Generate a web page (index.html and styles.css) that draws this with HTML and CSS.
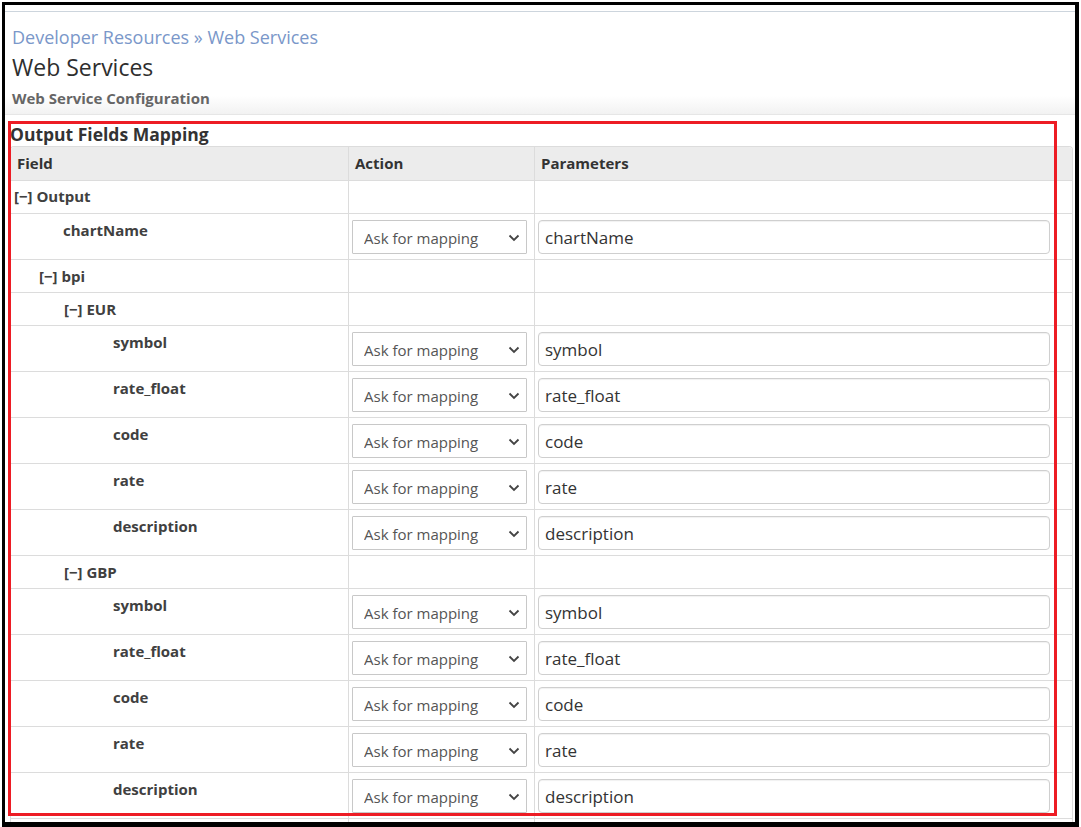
FILE: index.html
```html
<!DOCTYPE html>
<html>
<head>
<meta charset="utf-8">
<title>Web Services</title>
<link rel="stylesheet" href="styles.css">
</head>
<body>
<div class="frame">
  <div class="page">
    <div class="header">
      <div class="crumbs"><a href="#">Developer Resources</a> » <a href="#">Web Services</a></div>
      <h1 class="title">Web Services</h1>
      <div class="subtitle">Web Service Configuration</div>
    </div>
    <div class="content">
      <h2 class="section-title">Output Fields Mapping</h2>
      <table class="map">
        <colgroup><col class="c1"><col class="c2"><col class="c3"></colgroup>
        <thead>
          <tr><th>Field</th><th>Action</th><th>Parameters</th></tr>
        </thead>
        <tbody>
          <tr><td class="f l0">[&minus;] Output</td><td></td><td></td></tr>
          <tr><td class="f l2">chartName</td><td class="ctl"><div class="sel"><select><option>Ask for mapping</option></select><svg class="chev" width="12" height="8" viewBox="0 0 12 8"><path d="M1.5 1.5 L6 6 L10.5 1.5" fill="none" stroke="#444" stroke-width="1.8"/></svg></div></td><td class="ctl"><input class="param" value="chartName"></td></tr>
          <tr><td class="f l1">[&minus;] bpi</td><td></td><td></td></tr>
          <tr><td class="f l2g">[&minus;] EUR</td><td></td><td></td></tr>
          <tr><td class="f l4">symbol</td><td class="ctl"><div class="sel"><select><option>Ask for mapping</option></select><svg class="chev" width="12" height="8" viewBox="0 0 12 8"><path d="M1.5 1.5 L6 6 L10.5 1.5" fill="none" stroke="#444" stroke-width="1.8"/></svg></div></td><td class="ctl"><input class="param" value="symbol"></td></tr>
          <tr><td class="f l4">rate_float</td><td class="ctl"><div class="sel"><select><option>Ask for mapping</option></select><svg class="chev" width="12" height="8" viewBox="0 0 12 8"><path d="M1.5 1.5 L6 6 L10.5 1.5" fill="none" stroke="#444" stroke-width="1.8"/></svg></div></td><td class="ctl"><input class="param" value="rate_float"></td></tr>
          <tr><td class="f l4">code</td><td class="ctl"><div class="sel"><select><option>Ask for mapping</option></select><svg class="chev" width="12" height="8" viewBox="0 0 12 8"><path d="M1.5 1.5 L6 6 L10.5 1.5" fill="none" stroke="#444" stroke-width="1.8"/></svg></div></td><td class="ctl"><input class="param" value="code"></td></tr>
          <tr><td class="f l4">rate</td><td class="ctl"><div class="sel"><select><option>Ask for mapping</option></select><svg class="chev" width="12" height="8" viewBox="0 0 12 8"><path d="M1.5 1.5 L6 6 L10.5 1.5" fill="none" stroke="#444" stroke-width="1.8"/></svg></div></td><td class="ctl"><input class="param" value="rate"></td></tr>
          <tr><td class="f l4">description</td><td class="ctl"><div class="sel"><select><option>Ask for mapping</option></select><svg class="chev" width="12" height="8" viewBox="0 0 12 8"><path d="M1.5 1.5 L6 6 L10.5 1.5" fill="none" stroke="#444" stroke-width="1.8"/></svg></div></td><td class="ctl"><input class="param" value="description"></td></tr>
          <tr><td class="f l2g">[&minus;] GBP</td><td></td><td></td></tr>
          <tr><td class="f l4">symbol</td><td class="ctl"><div class="sel"><select><option>Ask for mapping</option></select><svg class="chev" width="12" height="8" viewBox="0 0 12 8"><path d="M1.5 1.5 L6 6 L10.5 1.5" fill="none" stroke="#444" stroke-width="1.8"/></svg></div></td><td class="ctl"><input class="param" value="symbol"></td></tr>
          <tr><td class="f l4">rate_float</td><td class="ctl"><div class="sel"><select><option>Ask for mapping</option></select><svg class="chev" width="12" height="8" viewBox="0 0 12 8"><path d="M1.5 1.5 L6 6 L10.5 1.5" fill="none" stroke="#444" stroke-width="1.8"/></svg></div></td><td class="ctl"><input class="param" value="rate_float"></td></tr>
          <tr><td class="f l4">code</td><td class="ctl"><div class="sel"><select><option>Ask for mapping</option></select><svg class="chev" width="12" height="8" viewBox="0 0 12 8"><path d="M1.5 1.5 L6 6 L10.5 1.5" fill="none" stroke="#444" stroke-width="1.8"/></svg></div></td><td class="ctl"><input class="param" value="code"></td></tr>
          <tr><td class="f l4">rate</td><td class="ctl"><div class="sel"><select><option>Ask for mapping</option></select><svg class="chev" width="12" height="8" viewBox="0 0 12 8"><path d="M1.5 1.5 L6 6 L10.5 1.5" fill="none" stroke="#444" stroke-width="1.8"/></svg></div></td><td class="ctl"><input class="param" value="rate"></td></tr>
          <tr><td class="f l4">description</td><td class="ctl"><div class="sel"><select><option>Ask for mapping</option></select><svg class="chev" width="12" height="8" viewBox="0 0 12 8"><path d="M1.5 1.5 L6 6 L10.5 1.5" fill="none" stroke="#444" stroke-width="1.8"/></svg></div></td><td class="ctl"><input class="param" value="description"></td></tr>
          <tr><td class="f l4">&nbsp;</td><td></td><td></td></tr>
        </tbody>
      </table>
    </div>
  </div>
  <div class="highlight"></div>
</div>
</body>
</html>
```
FILE: styles.css
```css
html, body {
  margin: 0;
  padding: 0;
  height: 100%;
  overflow: hidden;
  background: #fff;
  font-family: "Open Sans", "Liberation Sans", sans-serif;
}

.frame {
  position: relative;
  box-sizing: border-box;
  margin: 2px 2px 0 2px;
  height: 825px;
  border-style: solid;
  border-color: #000;
  border-width: 3px 4px 5px 3px;
  overflow: hidden;
  padding-top: 6px;
}

.page {
  border-top: 1px solid #cdd5dd;
}

.header {
  padding: 13px 7px 0 7px;
  height: 89px;
  background: linear-gradient(to bottom, #fff 0%, #fff 82%, #f2f2f2 100%);
  border-bottom: 1px solid #e6e6e6;
}

.crumbs {
  font-size: 18px;
  line-height: 24px;
  color: #7a97c9;
}

.crumbs a {
  color: #7a97c9;
  text-decoration: none;
}

.title {
  margin: 2px 0 0 0;
  font-size: 23px;
  line-height: 32px;
  font-weight: 400;
  color: #2e2e2e;
}

.subtitle {
  margin-top: 5px;
  font-size: 15px;
  line-height: 20px;
  font-weight: 700;
  color: #666;
}

.content {
  padding: 7px 4px 0 5px;
}

.section-title {
  margin: 0;
  font-size: 17.5px;
  line-height: 24px;
  font-weight: 700;
  color: #333;
}

.map {
  width: 1061px;
  table-layout: fixed;
  border-collapse: separate;
  border-spacing: 0;
  border: 1px solid #dcdcdc;
  border-bottom: none;
  border-radius: 4px 4px 0 0;
}

.map .c1 { width: 337px; }
.map .c2 { width: 186px; }
.map .c3 { width: 538px; }

.map th {
  background: #ececec;
  text-align: left;
  font-size: 15px;
  line-height: 20px;
  font-weight: 700;
  color: #333;
  padding: 6px 6px 7px 6px;
  border-bottom: 1px solid #dcdcdc;
}

.map th:first-child { border-top-left-radius: 4px; }
.map th:last-child { border-top-right-radius: 4px; }

.map th + th,
.map td + td {
  border-left: 1px solid #dcdcdc;
}

.map td {
  vertical-align: top;
  padding: 6px 3px 6px 3px;
  border-bottom: 1px solid #dcdcdc;
  font-size: 15px;
  line-height: 20px;
  height: 20px;
}

.map td.ctl {
  padding-bottom: 5px;
}

.map td.f {
  font-weight: 700;
  color: #404040;
}

.map td.l0 { padding-left: 3px; padding-top: 5px; }
.map td.l1 { padding-left: 28px; }
.map td.l2 { padding-left: 52px; padding-top: 6px; }
.map td.l2g { padding-left: 53px; }
.map td.l4 { padding-left: 102px; padding-top: 6px; }

.sel {
  position: relative;
  width: 175px;
  height: 34px;
}

.sel select {
  -webkit-appearance: none;
  appearance: none;
  box-sizing: border-box;
  width: 175px;
  height: 34px;
  margin: 0;
  border: 1px solid #c8c8c8;
  border-radius: 1px;
  background: #fff;
  padding: 1px 0 0 11px;
  font-family: "Open Sans", "Liberation Sans", sans-serif;
  font-size: 15px;
  color: #555;
}

.chev {
  position: absolute;
  right: 7px;
  top: 14px;
}

.param {
  box-sizing: border-box;
  display: block;
  width: 512px;
  height: 34px;
  margin: 0;
  border: 1px solid #cfcfcf;
  border-radius: 4px;
  box-shadow: inset 0 1px 1px rgba(0,0,0,0.06);
  padding: 0 6px;
  font-family: "Open Sans", "Liberation Sans", sans-serif;
  font-size: 17px;
  color: #333;
}

.highlight {
  position: absolute;
  left: 3px;
  top: 116px;
  width: 1049px;
  height: 695px;
  box-sizing: border-box;
  border: 3px solid #ed1c24;
  pointer-events: none;
}
```
